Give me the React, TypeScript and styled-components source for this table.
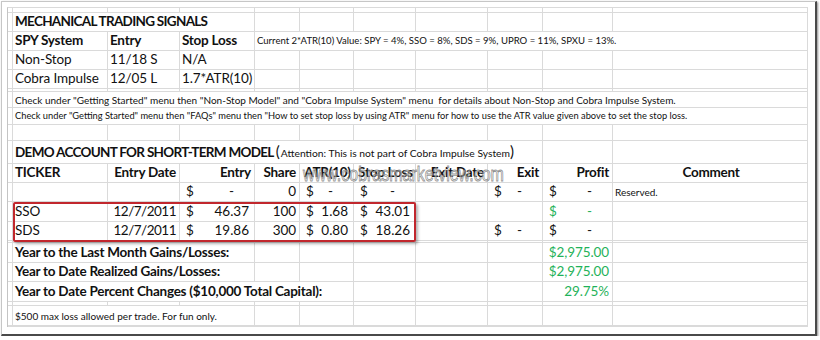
import React from "react";
import styled, { createGlobalStyle } from "styled-components";

const GRID = "#dadada";
const GREEN = "#1fb25a";

const GlobalStyle = createGlobalStyle`
	body {
		margin: 0;
		background: #ffffff;
		font-family: Lato, "Open Sans", sans-serif;
	}
`;

const Frame = styled.div`
	width: 816px;
	height: 335px;
	margin: 1px 0 0 1px;
	box-sizing: border-box;
	background: #ffffff;
	border-top: 1px solid #c6c6c6;
	border-left: 1px solid #c6c6c6;
	border-right: 2px solid #4a4a4a;
	border-bottom: 2px solid #4a4a4a;
	box-shadow: 1px 1px 2px rgba(0, 0, 0, 0.45);
	padding: 5px 0 0 5px;
`;

const Sheet = styled.div`
	position: relative;
	display: grid;
	grid-template-columns: 5px 95px 72px 75px 45px 54px 62px 72px 55px 70px 195px;
	grid-template-rows:
		5px 19px 19px 19px 19px 3px 16px 17px 16px 23px 19px 19px 20px 19px
		2px 20px 19px 20px 4px 20px 1px;
	width: 800px;
	border-top: 1px solid ${GRID};
	border-left: 1px solid #c4c4c4;
	color: #111;
`;

type Kind = "title" | "bold" | "text" | "num" | "small" | "tight" | "note";

const sizes: Record<Kind, string> = {
	title: "13.5px",
	bold: "13.5px",
	text: "13.5px",
	num: "13.5px",
	small: "9.55px",
	tight: "9.3px",
	note: "10px",
};

const spacing: Record<Kind, string> = {
	title: "-0.7px",
	bold: "-0.25px",
	text: "-0.1px",
	num: "-0.5px",
	small: "0",
	tight: "0",
	note: "0",
};

const Cell = styled.div<{
	$span: number;
	$align: "left" | "right" | "center";
	$kind: Kind;
	$green?: boolean;
}>`
	grid-column: span ${(p) => p.$span};
	box-sizing: border-box;
	border-right: 1px solid ${GRID};
	border-bottom: 1px solid ${GRID};
	display: flex;
	align-items: center;
	justify-content: ${(p) =>
		p.$align === "right" ? "flex-end" : p.$align === "center" ? "center" : "flex-start"};
	padding: ${(p) => (p.$align === "right" ? "0 3px 0 0" : "0 0 0 2px")};
	white-space: pre;
	color: ${(p) => (p.$green ? GREEN : "#111")};
	font-size: ${(p) => sizes[p.$kind]};
	letter-spacing: ${(p) => spacing[p.$kind]};
	font-weight: ${(p) => (p.$kind === "title" || p.$kind === "bold" ? 700 : 400)};
	line-height: 1;
`;

const Acct = styled.div<{ $green?: boolean; $dash?: boolean }>`
	box-sizing: border-box;
	border-right: 1px solid ${GRID};
	border-bottom: 1px solid ${GRID};
	display: flex;
	align-items: center;
	justify-content: space-between;
	padding: ${(p) => (p.$dash ? "0 20px 0 6px" : "0 5px 0 6px")};
	font-size: 13.5px;
	line-height: 1;
	color: ${(p) => (p.$green ? GREEN : "#111")};
`;

const Hint = styled.span`
	font-size: 10.3px;
	font-weight: 400;
	letter-spacing: 0;
	margin-left: 1px;
`;

const Paren = styled.span`
	font-weight: 400;
	font-size: 15px;
	letter-spacing: 0;
`;

const RedBox = styled.div`
	position: absolute;
	left: 5px;
	top: 194px;
	width: 403px;
	height: 40px;
	box-sizing: border-box;
	border: 2px solid #c1272d;
	border-radius: 2px;
	box-shadow: 2px 2px 3px rgba(0, 0, 0, 0.3);
	pointer-events: none;
`;

const Watermark = styled.div`
	position: absolute;
	left: 295px;
	top: 155px;
	font-family: "Liberation Sans", Arial, sans-serif;
	font-size: 20px;
	line-height: 23px;
	color: rgba(255, 255, 255, 0.5);
	-webkit-text-stroke: 0.9px rgba(110, 110, 110, 0.75);
	transform: scaleX(0.8);
	transform-origin: left top;
	pointer-events: none;
`;

type C = {
	t?: React.ReactNode;
	s?: number;
	a?: "left" | "right" | "center";
	k?: Kind;
	g?: boolean;
	acct?: string;
};

const empty = (n: number): C[] => Array.from({ length: n }, () => ({}));
const $ = (v: string, g?: boolean): C => ({ acct: v, g });

const rows: C[][] = [
	empty(11),
	[{}, { t: "MECHANICAL TRADING SIGNALS", s: 3, k: "title" }, ...empty(7)],
	[
		{},
		{ t: "SPY System", k: "bold" },
		{ t: "Entry", k: "bold" },
		{ t: "Stop Loss", k: "bold" },
		{
			t: "Current 2*ATR(10) Value: SPY = 4%, SSO = 8%, SDS = 9%, UPRO = 11%, SPXU = 13%.",
			s: 7,
			k: "small",
		},
	],
	[{}, { t: "Non-Stop" }, { t: "11/18 S" }, { t: "N/A" }, ...empty(7)],
	[{}, { t: "Cobra Impulse" }, { t: "12/05 L" }, { t: "1.7*ATR(10)" }, ...empty(7)],
	empty(11),
	[
		{},
		{
			t: 'Check under "Getting Started" menu then "Non-Stop Model" and "Cobra Impulse System" menu  for details about Non-Stop and Cobra Impulse System.',
			s: 10,
			k: "note",
		},
	],
	[
		{},
		{
			t: 'Check under "Getting Started" menu then "FAQs" menu then "How to set stop loss by using ATR" menu for how to use the ATR value given above to set the stop loss.',
			s: 10,
			k: "tight",
		},
	],
	empty(11),
	[
		{},
		{
			t: (
				<span>
					DEMO ACCOUNT FOR SHORT-TERM MODEL <Paren>(</Paren>
					<Hint>Attention: This is not part of Cobra Impulse System</Hint>
					<Paren>)</Paren>
				</span>
			),
			s: 8,
			k: "title",
		},
		...empty(2),
	],
	[
		{},
		{ t: "TICKER", k: "bold" },
		{ t: "Entry Date", k: "bold", a: "right" },
		{ t: "Entry", k: "bold", a: "right" },
		{ t: "Share", k: "bold", a: "right" },
		{ t: "ATR(10)", k: "bold", a: "center" },
		{ t: "Stop Loss", k: "bold", a: "center" },
		{ t: "Exit Date", k: "bold", a: "right" },
		{ t: "Exit", k: "bold", a: "right" },
		{ t: "Profit", k: "bold", a: "right" },
		{ t: "Comment", k: "bold", a: "center" },
	],
	[
		{},
		{},
		{},
		$("-"),
		{ t: "0", a: "right" },
		$("-"),
		$("-"),
		{},
		$("-"),
		$("-"),
		{ t: "Reserved.", k: "note" },
	],
	[
		{},
		{ t: "SSO" },
		{ t: "12/7/2011", a: "right", k: "num" },
		$("46.37"),
		{ t: "100", a: "right" },
		$("1.68"),
		$("43.01"),
		{},
		{},
		$("-", true),
		{},
	],
	[
		{},
		{ t: "SDS" },
		{ t: "12/7/2011", a: "right", k: "num" },
		$("19.86"),
		{ t: "300", a: "right" },
		$("0.80"),
		$("18.26"),
		{},
		$("-"),
		$("-"),
		{},
	],
	empty(11),
	[
		{},
		{ t: "Year to the Last Month Gains/Losses:", s: 3, k: "bold" },
		...empty(5),
		{ t: "$2,975.00", a: "right", g: true },
		{},
	],
	[
		{},
		{ t: "Year to Date Realized Gains/Losses:", s: 3, k: "bold" },
		...empty(5),
		{ t: "$2,975.00", a: "right", g: true },
		{},
	],
	[
		{},
		{ t: "Year to Date Percent Changes ($10,000 Total Capital):", s: 5, k: "bold" },
		...empty(3),
		{ t: "29.75%", a: "right", g: true },
		{},
	],
	empty(11),
	[{}, { t: "$500 max loss allowed per trade. For fun only.", s: 3, k: "note" }, ...empty(7)],
	empty(11),
];

export default function App() {
	return (
		<>
			<GlobalStyle />
			<Frame>
				<Sheet>
					{rows.map((row, r) =>
						row.map((c, i) =>
							c.acct !== undefined ? (
								<Acct key={`${r}-${i}`} $green={c.g} $dash={c.acct === "-"}>
									<span>$</span>
									<span>{c.acct}</span>
								</Acct>
							) : (
								<Cell
									key={`${r}-${i}`}
									$span={c.s ?? 1}
									$align={c.a ?? "left"}
									$kind={c.k ?? "text"}
									$green={c.g}
								>
									{c.t}
								</Cell>
							)
						)
					)}
					<Watermark>www.cobrasmarketview.com</Watermark>
					<RedBox />
				</Sheet>
			</Frame>
		</>
	);
}
